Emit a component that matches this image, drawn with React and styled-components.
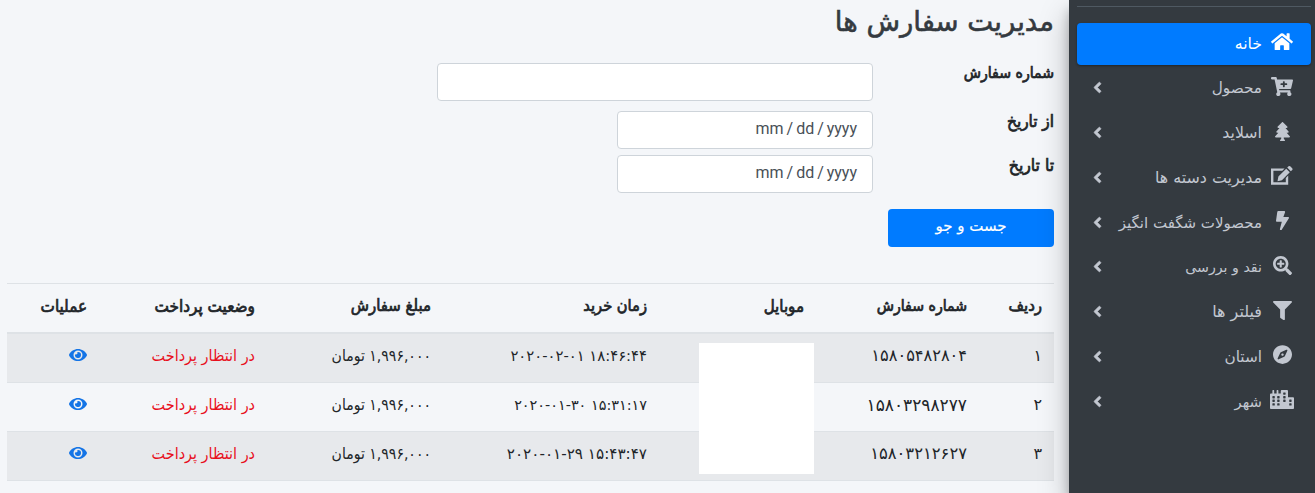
import React from 'react';
import styled, { createGlobalStyle, css } from 'styled-components';
import {
  FaHome, FaCartPlus, FaTree, FaBolt, FaSearchPlus, FaFilter, FaCompass, FaCity, FaAngleLeft, FaEye,
} from 'react-icons/fa';

const GlobalStyle = createGlobalStyle`
  *, *::before, *::after { box-sizing: border-box; }
  body {
    margin: 0;
    background: #f4f6f9;
    color: #212529;
    font: 400 16px/24px "DejaVu Sans", sans-serif;
    overflow: hidden;
  }
`;

const condensed = css`
  font-family: "DejaVu Sans Condensed", "DejaVu Sans", sans-serif;
  font-stretch: condensed;
`;

const semiBold = css`
  ${condensed}
  font-weight: 400;
  -webkit-text-stroke: 0.7px currentColor;
`;

const Page = styled.div`
  display: flex;
  height: 493px;
  overflow: hidden;
  direction: rtl;
`;

const Sidebar = styled.aside`
  position: relative;
  z-index: 1;
  flex: 0 0 246px;
  padding: 6px 4px 0 8px;
  background: #343a40;
  box-shadow: 0 14px 28px rgba(0, 0, 0, 0.25), 0 10px 10px rgba(0, 0, 0, 0.22);
`;

const Divider = styled.div`
  height: 1px;
  margin-bottom: 16px;
  background: #4f5962;
`;

const Nav = styled.nav`
  display: flex;
  flex-direction: column;
  gap: 2.8px;
`;

const NavItem = styled.a`
  display: flex;
  align-items: center;
  height: 42px;
  padding: 0 16px;
  border-radius: 4px;
  color: #c2c7d0;
  ${({ $active }) => $active && css`
    background: #007bff;
    color: #fff;
    box-shadow: 0 1px 3px rgba(0, 0, 0, 0.12), 0 1px 2px rgba(0, 0, 0, 0.24);
  `}
`;

const NavIcon = styled.span`
  display: flex;
  justify-content: center;
  flex: 0 0 26px;
  margin: 0 0 5px 7px;
  svg {
    flex: none;
    width: ${({ $width }) => $width}px;
    height: 19.2px;
  }
`;

const NavLabel = styled.span`
  flex: 1;
  margin-bottom: 1px;
  font-size: ${({ $size }) => $size}px;
  white-space: nowrap;
`;

const Caret = styled(FaAngleLeft)`
  flex: none;
  width: 11px;
  height: 17px;
  margin: 0 1px 2px -1px;
  stroke: currentColor;
  stroke-width: 16px;
`;

const Main = styled.main`
  flex: 1;
  padding: 4px 15px 0 7px;
`;

const Title = styled.h1`
  margin: 0;
  height: 59px;
  color: #343a40;
  font-size: 27.5px;
  font-weight: 400;
  line-height: 34px;
  -webkit-text-stroke: 0.6px currentColor;
`;

const Field = styled.div`
  display: flex;
  align-items: flex-start;
  margin-bottom: ${({ $gap }) => $gap}px;
`;

const Label = styled.label`
  flex: 0 0 181px;
  ${semiBold}
  font-size: ${({ $size }) => $size}px;
  line-height: 20px;
`;

const Input = styled.div`
  width: ${({ $width }) => $width}px;
  height: 38px;
  padding: 5px 15px 4px;
  border: 1px solid #ced4da;
  border-radius: 4px;
  background: #fff;
  color: #495057;
  font-family: Roboto, sans-serif;
  word-spacing: -1px;
`;

const LtrText = styled.span`
  direction: ltr;
  unicode-bidi: isolate;
`;

const SearchButton = styled.button`
  display: block;
  width: 166px;
  height: 38px;
  padding: 0 0 4px;
  border: 0;
  border-radius: 4px;
  background: #007bff;
  color: #fff;
  font: 400 15px/24px "DejaVu Sans", sans-serif;
  -webkit-text-stroke: 0.2px currentColor;
`;

const TableWrap = styled.div`
  position: relative;
  margin-top: 36px;
`;

const Row = styled.div`
  display: grid;
  grid-template-columns: 75px 163px 157px 216px 176px 168px 92px;
  height: 49px;
  border-bottom: 1px solid #dee2e6;
  background: ${({ $striped }) => ($striped ? '#e7e9ec' : 'transparent')};
`;

const HeadRow = styled(Row)`
  height: 51px;
  border-top: 1px solid #dee2e6;
  border-bottom-width: 2px;
`;

const Cell = styled.div`
  padding: 10px 12px 0;
  font-size: ${({ $size }) => $size || 16}px;
  color: ${({ $danger }) => ($danger ? '#e8101c' : 'inherit')};
  white-space: nowrap;
`;

const HeadCell = styled(Cell)`
  ${semiBold}
`;

const TextCell = styled(Cell)`
  ${condensed}
`;

const Eye = styled(FaEye)`
  display: block;
  width: 18px;
  height: 16px;
  margin-top: 3px;
  color: #1474e6;
`;

const MobileCover = styled.div`
  position: absolute;
  top: 60px;
  left: 692px;
  width: 115px;
  height: 131px;
  background: #fff;
`;

function EditIcon() {
  return (
    <svg viewBox="0 0 22 19" fill="currentColor" preserveAspectRatio="none">
      <path d="M0 2.4h13.6l-2.3 2.4H2.4v11.4h12.4v-4.4l2.4-2.4V18.6H0z" />
      <path d="M15.2 2.6l3.6 3.6-7.9 7.9-4.4 1 .9-4.6zM16.2 1.6L17.6.3q.8-.6 1.6 0l2 2q.7.8 0 1.6l-1.4 1.4z" />
    </svg>
  );
}

const navItems = [
  { label: 'خانه', icon: FaHome, width: 22, size: 15.7, active: true },
  { label: 'محصول', icon: FaCartPlus, width: 22, size: 15.3 },
  { label: 'اسلاید', icon: FaTree, width: 15, size: 15.8 },
  { label: 'مدیریت دسته ها', icon: EditIcon, width: 22, size: 15.9 },
  { label: 'محصولات شگفت انگیز', icon: FaBolt, width: 13, size: 15 },
  { label: 'نقد و بررسی', icon: FaSearchPlus, width: 19, size: 14.2 },
  { label: 'فیلتر ها', icon: FaFilter, width: 19, size: 16 },
  { label: 'استان', icon: FaCompass, width: 19, size: 15.3 },
  { label: 'شهر', icon: FaCity, width: 24, size: 14.8 },
];

const headers = [
  { label: 'ردیف', size: 16.6 },
  { label: 'شماره سفارش', size: 15.7 },
  { label: 'موبایل', size: 16.8 },
  { label: 'زمان خرید', size: 16.3 },
  { label: 'مبلغ سفارش', size: 16.6 },
  { label: 'وضعیت پرداخت', size: 17 },
  { label: 'عملیات', size: 16.9 },
];

const orders = [
  { row: '۱', number: '۱۵۸۰۵۴۸۲۸۰۴', numberSize: 16.2, time: '۲۰۲۰-۰۲-۰۱ ۱۸:۴۶:۴۴', timeSize: 14.8 },
  { row: '۲', number: '۱۵۸۰۳۲۹۸۲۷۷', numberSize: 17, time: '۲۰۲۰-۰۱-۳۰ ۱۵:۳۱:۱۷', timeSize: 14.4 },
  { row: '۳', number: '۱۵۸۰۳۲۱۲۶۲۷', numberSize: 16.4, time: '۲۰۲۰-۰۱-۲۹ ۱۵:۴۳:۴۷', timeSize: 15.2 },
];

export default function App() {
  return (
    <Page>
      <GlobalStyle />
      <Sidebar>
        <Divider />
        <Nav>
          {navItems.map(({ label, icon: Icon, width, size, active }) => (
            <NavItem key={label} $active={active}>
              <NavIcon $width={width}><Icon preserveAspectRatio="none" /></NavIcon>
              <NavLabel $size={size}>{label}</NavLabel>
              {!active && <Caret />}
            </NavItem>
          ))}
        </Nav>
      </Sidebar>
      <Main>
        <Title>مدیریت سفارش ها</Title>
        <Field $gap={10}>
          <Label $size={15.7}>شماره سفارش</Label>
          <Input $width={436} />
        </Field>
        <Field $gap={6}>
          <Label $size={17}>از تاریخ</Label>
          <Input $width={256}><LtrText>mm / dd / yyyy</LtrText></Input>
        </Field>
        <Field $gap={16}>
          <Label $size={17.4}>تا تاریخ</Label>
          <Input $width={256}><LtrText>mm / dd / yyyy</LtrText></Input>
        </Field>
        <SearchButton>جست و جو</SearchButton>
        <TableWrap>
          <HeadRow>
            {headers.map(({ label, size }) => <HeadCell key={label} $size={size}>{label}</HeadCell>)}
          </HeadRow>
          {orders.map((o, i) => (
            <Row key={o.row} $striped={i % 2 === 0}>
              <Cell>{o.row}</Cell>
              <Cell $size={o.numberSize}>{o.number}</Cell>
              <Cell />
              <Cell $size={o.timeSize}><LtrText>{o.time}</LtrText></Cell>
              <TextCell $size={15.6}>۱,۹۹۶,۰۰۰ تومان</TextCell>
              <TextCell $danger>در انتظار پرداخت</TextCell>
              <Cell><Eye /></Cell>
            </Row>
          ))}
          <MobileCover />
        </TableWrap>
      </Main>
    </Page>
  );
}
